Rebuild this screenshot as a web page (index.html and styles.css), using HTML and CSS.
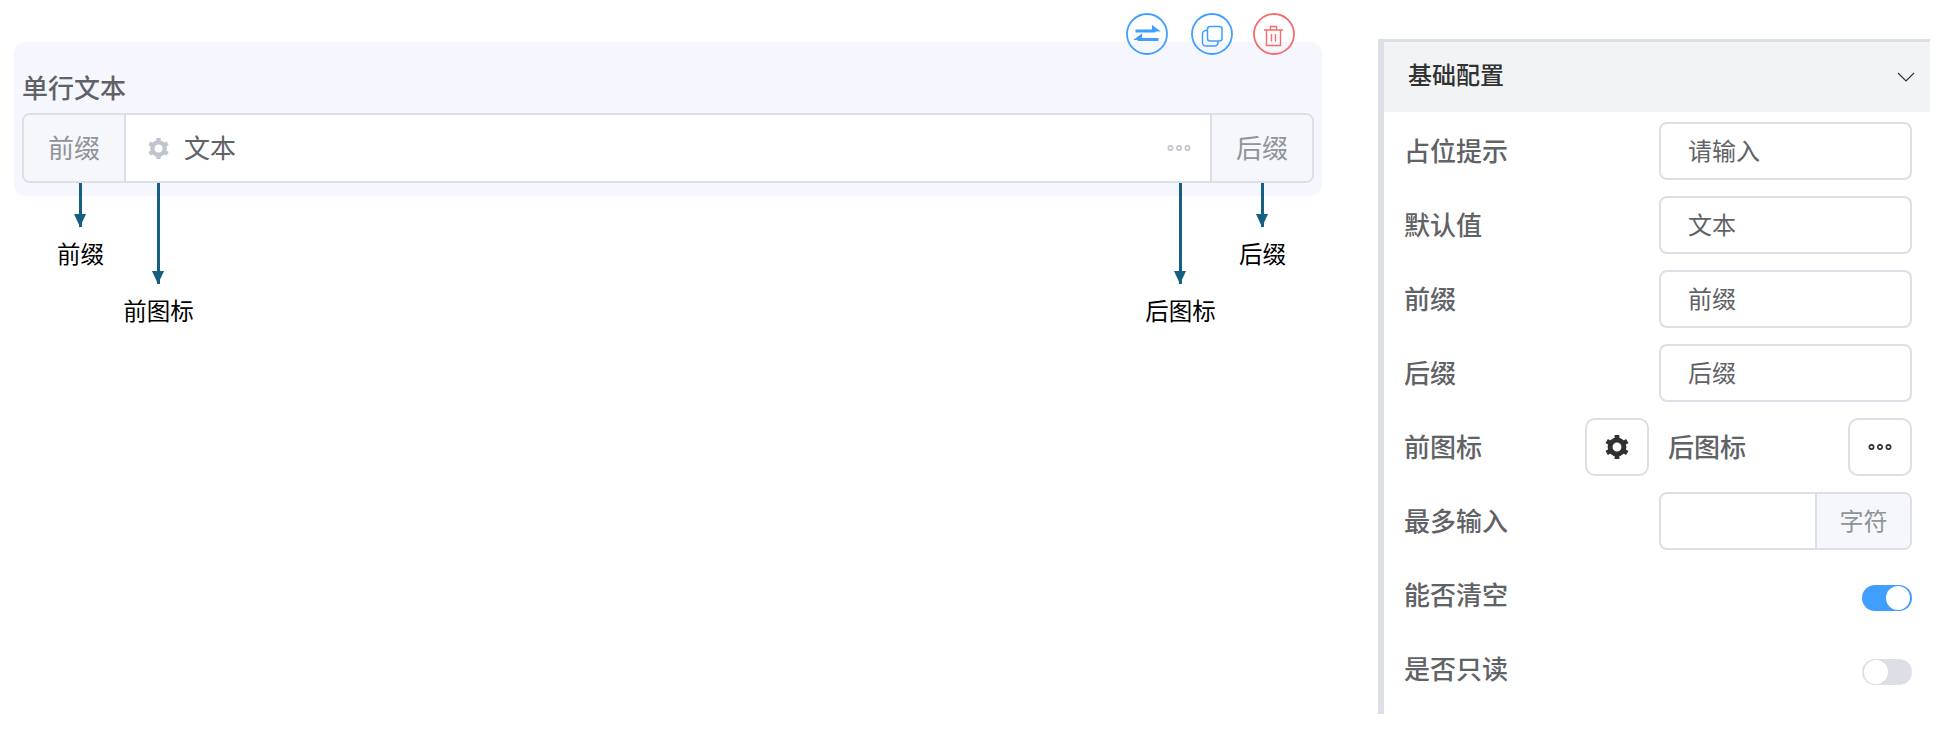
FILE: index.html
```html
<!DOCTYPE html>
<html lang="zh">
<head>
<meta charset="utf-8">
<title>单行文本</title>
<link rel="stylesheet" href="styles.css">
</head>
<body>
<svg class="defs" width="0" height="0" aria-hidden="true">
  <symbol id="gear" viewBox="0 0 24 24">
    <circle cx="12" cy="12" r="6.4" fill="none" stroke="currentColor" stroke-width="4.6"/>
    <g stroke="currentColor" stroke-width="4.4">
      <path d="M12 1v5M12 18v5M2.5 6.5l4.3 2.5M17.2 15l4.3 2.5M2.5 17.5L6.8 15M17.2 9l4.3-2.5"/>
    </g>
  </symbol>
  <symbol id="dots" viewBox="0 0 24 6">
    <g fill="none" stroke="currentColor" stroke-width="1.7">
      <circle cx="3.5" cy="3" r="2.2"/><circle cx="12" cy="3" r="2.2"/><circle cx="20.5" cy="3" r="2.2"/>
    </g>
  </symbol>
</svg>
<main class="page">
  <section class="canvas">
    <div class="card">
      <div class="toolbar">
        <svg class="tool tool-blue" viewBox="0 0 42 42">
          <circle cx="21" cy="21" r="20" fill="none" stroke="currentColor" stroke-width="1.8"/>
          <path d="M9.5 18h20M11.5 26.5h21" fill="none" stroke="currentColor" stroke-width="3.2"/>
          <path d="M26.5 13l6.5 5-6.5 0zM15.5 21.5l-6.5 5 6.5 0z" fill="currentColor" stroke="currentColor" stroke-width="1.2"/>
        </svg>
        <svg class="tool tool-blue" viewBox="0 0 42 42">
          <circle cx="21" cy="21" r="20" fill="none" stroke="currentColor" stroke-width="1.8"/>
          <rect x="16.5" y="13.5" width="14.5" height="14.5" rx="2.5" fill="none" stroke="currentColor" stroke-width="1.5"/>
          <path d="M16.5 17.5h-1.6a3.4 3.4 0 0 0-3.4 3.4v8.7a3.4 3.4 0 0 0 3.4 3.4h8.7a3.4 3.4 0 0 0 3.4-3.4V28" fill="none" stroke="currentColor" stroke-width="1.5"/>
        </svg>
        <svg class="tool tool-red" viewBox="0 0 42 42">
          <circle cx="21" cy="21" r="20" fill="none" stroke="currentColor" stroke-width="1.8"/>
          <path d="M11 17h19M17.5 17v-3.5h6V17M13.5 17v15.5h14V17M18.5 21v7.5M22.5 21v7.5" fill="none" stroke="currentColor" stroke-width="1.4"/>
        </svg>
      </div>
      <div class="card-title">单行文本</div>
      <div class="group">
        <div class="addon addon-pre">前缀</div>
        <div class="field">
          <svg class="field-gear"><use href="#gear"/></svg>
          <span class="field-text">文本</span>
          <svg class="field-dots"><use href="#dots"/></svg>
        </div>
        <div class="addon addon-post">后缀</div>
      </div>
      <div class="note note-a"><i class="arrow arrow-short"></i><span>前缀</span></div>
      <div class="note note-b"><i class="arrow arrow-long"></i><span>前图标</span></div>
      <div class="note note-c"><i class="arrow arrow-long"></i><span>后图标</span></div>
      <div class="note note-d"><i class="arrow arrow-short"></i><span>后缀</span></div>
    </div>
  </section>
  <aside class="panel">
    <header class="panel-head">
      <span>基础配置</span>
      <svg class="chevron" viewBox="0 0 18 10"><path d="M1 1l8 8 8-8" fill="none" stroke="currentColor" stroke-width="1.1"/></svg>
    </header>
    <div class="panel-body">
      <div class="row"><label>占位提示</label><div class="box"><span class="box-text">请输入</span></div></div>
      <div class="row"><label>默认值</label><div class="box"><span class="box-text">文本</span></div></div>
      <div class="row"><label>前缀</label><div class="box"><span class="box-text">前缀</span></div></div>
      <div class="row"><label>后缀</label><div class="box"><span class="box-text">后缀</span></div></div>
      <div class="row">
        <div class="half"><label>前图标</label><div class="icon-btn"><svg class="btn-gear"><use href="#gear"/></svg></div></div>
        <div class="half"><label>后图标</label><div class="icon-btn"><svg class="btn-dots"><use href="#dots"/></svg></div></div>
      </div>
      <div class="row"><label>最多输入</label><div class="box box-split"><div class="box-input"></div><div class="box-unit">字符</div></div></div>
      <div class="row"><label>能否清空</label><div class="switch switch-on"><i></i></div></div>
      <div class="row"><label>是否只读</label><div class="switch"><i></i></div></div>
    </div>
  </aside>
</main>
</body>
</html>
```
FILE: styles.css
```css
* { box-sizing: border-box; }
html, body { margin: 0; padding: 0; background: #fff; }
body {
  height: 734px;
  overflow: hidden;
  font-family: "Noto Sans CJK SC", "Noto Sans", sans-serif;
  color: #606266;
}
.defs { position: absolute; }
.page { display: flex; align-items: flex-start; }

.canvas { width: 1378px; padding: 42px 0 0 14px; flex: none; }
.card {
  position: relative;
  width: 1308px;
  height: 154px;
  padding: 0 8px 13px;
  display: flex;
  flex-direction: column;
  justify-content: flex-end;
  background: #f6f7fe;
  border-radius: 12px;
}
.toolbar {
  position: absolute;
  top: -29px;
  right: 27px;
  display: flex;
  gap: 23px;
}
.tool { width: 42px; height: 42px; display: block; }
.tool-blue { color: #409eff; }
.tool-red { color: #f56c6c; margin-left: -3px; }

.card-title { font-size: 26px; line-height: 36px; font-weight: 500; margin-bottom: 8px; }
.group {
  display: flex;
  height: 70px;
  border: 2px solid #dcdfe6;
  border-radius: 8px;
  overflow: hidden;
  background: #fff;
  font-size: 26px;
}
.addon {
  flex: none;
  display: flex;
  align-items: center;
  justify-content: center;
  padding-bottom: 3px;
  background: #f5f7fa;
  color: #909399;
}
.addon-pre { border-right: 2px solid #dcdfe6; width: 102px; }
.addon-post { border-left: 2px solid #dcdfe6; width: 102px; }
.field { flex: 1; display: flex; align-items: center; padding: 0 19px 0 21px; }
.field-gear { width: 23px; height: 23px; color: #c0c4cc; flex: none; }
.field-text { margin-left: 14px; padding-bottom: 3px; flex: 1; }
.field-dots { width: 24px; height: 6px; color: #c0c4cc; flex: none; }

.note {
  position: absolute;
  top: 141px;
  display: flex;
  flex-direction: column;
  align-items: center;
  width: 80px;
  color: #000;
  font-size: 23.5px;
  line-height: 34px;
}
.note span { white-space: nowrap; }
.note-a { left: 26.5px; }
.note-b { left: 104.5px; }
.note-c { left: 1126.5px; }
.note-d { left: 1208.5px; }
.arrow { position: relative; display: block; width: 3px; background: #156082; }
.arrow::after {
  content: "";
  position: absolute;
  left: -5px;
  bottom: 0;
  border-left: 6.5px solid transparent;
  border-right: 6.5px solid transparent;
  border-top: 13px solid #156082;
}
.arrow-short { height: 44px; margin-bottom: 9px; }
.arrow-long { height: 101px; margin-bottom: 9px; }

.panel {
  width: 552px;
  height: 675px;
  margin-top: 39px;
  flex: none;
  border-left: 6px solid #dcdfe6;
}
.panel-head {
  height: 73px;
  display: flex;
  align-items: center;
  justify-content: space-between;
  padding: 0 15px 0 24px;
  background: #f2f3f5;
  border-top: 3px solid #dcdfe6;
  font-size: 24px;
  font-weight: 500;
  color: #303133;
}
.panel-head span { padding-bottom: 8px; }
.chevron { width: 18px; height: 10px; color: #303133; }
.panel-body {
  display: flex;
  flex-direction: column;
  gap: 16px;
  padding: 10px 18px 0 20px;
}
.row {
  display: flex;
  align-items: center;
  justify-content: space-between;
  height: 58px;
}
label { font-size: 26px; font-weight: 500; line-height: 36px; padding-bottom: 3px; color: #606266; white-space: nowrap; }
.box {
  width: 253px;
  height: 58px;
  border: 2px solid #dcdfe6;
  border-radius: 8px;
  display: flex;
  align-items: center;
  overflow: hidden;
  font-size: 24px;
}
.box-text { padding: 0 0 3px 27px; color: #606266; }
.box-input { flex: 1; }
.box-unit {
  width: 95px;
  height: 100%;
  display: flex;
  align-items: center;
  justify-content: center;
  padding-bottom: 3px;
  background: #f5f7fa;
  border-left: 2px solid #dcdfe6;
  color: #909399;
}
.half { width: 244px; display: flex; align-items: center; justify-content: space-between; }
.half:first-child { width: 245px; margin-right: 19px; }
.icon-btn {
  width: 64px;
  height: 58px;
  border: 2px solid #dcdfe6;
  border-radius: 10px;
  display: flex;
  align-items: center;
  justify-content: center;
  color: #303133;
}
.btn-gear { width: 26px; height: 26px; }
.btn-dots { width: 24px; height: 6px; }

.switch {
  position: relative;
  width: 50px;
  height: 26px;
  margin-top: 5px;
  border-radius: 13px;
  background: #dcdfe6;
}
.switch i {
  position: absolute;
  top: 1px;
  left: 2px;
  width: 24px;
  height: 24px;
  border-radius: 50%;
  background: #fff;
}
.switch-on { background: #409eff; }
.switch-on i { left: 24px; }
```
